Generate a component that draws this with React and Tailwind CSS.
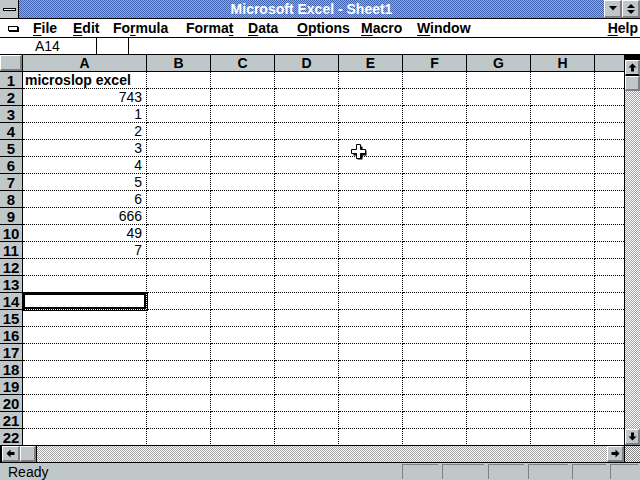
import React from "react";

const COLS = ["A", "B", "C", "D", "E", "F", "G", "H"];

const CELLS = {
  1: { text: "microslop excel", bold: true },
  2: { text: "743" },
  3: { text: "1" },
  4: { text: "2" },
  5: { text: "3" },
  6: { text: "4" },
  7: { text: "5" },
  8: { text: "6" },
  9: { text: "666" },
  10: { text: "49" },
  11: { text: "7" },
};

const MENUS = [
  ["File", 0, "w-[40px]"],
  ["Edit", 0, "w-[40px]"],
  ["Formula", 2, "w-[73px]"],
  ["Format", 5, "w-[62px]"],
  ["Data", 0, "w-[49px]"],
  ["Options", 0, "w-[64px]"],
  ["Macro", 0, "w-[56px]"],
  ["Window", 0, "w-[70px]"],
];

const raised =
  "border-t border-l border-t-white border-l-white border-r-2 border-b-2 border-r-[#808080] border-b-[#808080]";

const ARROWS = {
  up: "4.5,0.5 8.5,4.5 6,4.5 6,8.5 3,8.5 3,4.5 0.5,4.5",
  down: "4.5,8.5 8.5,4.5 6,4.5 6,0.5 3,0.5 3,4.5 0.5,4.5",
  left: "0.5,4.5 4.5,0.5 4.5,3 8.5,3 8.5,6 4.5,6 4.5,8.5",
  right: "8.5,4.5 4.5,0.5 4.5,3 0.5,3 0.5,6 4.5,6 4.5,8.5",
};

const ScrollButton = ({ dir, className = "" }) => (
  <div className={`flex items-center justify-center bg-[#c0c7c8] ${raised} ${className}`}>
    <svg width="9" height="9" viewBox="0 0 9 9">
      <polygon points={ARROWS[dir]} fill="#000" />
    </svg>
  </div>
);

const Menu = ({ label, hot }) => (
  <span>
    {label.slice(0, hot)}
    <span className="underline underline-offset-2">{label[hot]}</span>
    {label.slice(hot + 1)}
  </span>
);

const TitleBar = () => (
  <div className="flex h-[19px] border-b border-black">
    <div className="flex w-[19px] items-center justify-center border-r border-black bg-[#c0c7c8]">
      <div className="h-[3px] w-[13px] border border-black bg-white" />
    </div>
    <div className="flex flex-1 items-center justify-center [background-image:repeating-conic-gradient(#3f63b0_0_25%,#93acd9_0_50%)] [background-size:2px_2px]">
      <span className="text-[14px] font-bold leading-none text-white">
        Microsoft Excel - Sheet1
      </span>
    </div>
    <div className={`flex w-[18px] items-center justify-center border-l border-black bg-[#c0c7c8] ${raised}`}>
      <svg width="8" height="5" viewBox="0 0 8 5">
        <polygon points="0,0 8,0 4,4.5" fill="#000" />
      </svg>
    </div>
    <div className={`flex w-[18px] flex-col items-center justify-center gap-[2px] border-l border-black bg-[#c0c7c8] ${raised}`}>
      <svg width="8" height="4" viewBox="0 0 8 4">
        <polygon points="4,0 8,4 0,4" fill="#000" />
      </svg>
      <svg width="8" height="4" viewBox="0 0 8 4">
        <polygon points="0,0 8,0 4,4" fill="#000" />
      </svg>
    </div>
  </div>
);

const MenuBar = () => (
  <div className="flex h-[19px] items-center border-b border-black bg-white text-[14px] font-bold leading-none">
    <div className="ml-[8px] mr-[15px] h-[5px] w-[10px] border border-black bg-white shadow-[1px_1px_0_#000]" />
    {MENUS.map(([label, hot, w]) => (
      <div key={label} className={w}>
        <Menu label={label} hot={hot} />
      </div>
    ))}
    <div className="ml-auto pr-[2px]">
      <Menu label="Help" hot={0} />
    </div>
  </div>
);

const FormulaBar = () => (
  <div className="flex h-[17px] border-b border-black bg-white text-[14px] leading-none">
    <div className="flex w-[97px] items-center border-r border-black pl-[35px]">A14</div>
    <div className="w-[32px] border-r border-black" />
    <div className="flex-1" />
  </div>
);

const HeaderRow = () => (
  <div className="flex h-[17px] shrink-0 border-b border-black bg-[#c0c7c8] text-[14px] font-bold leading-none">
    <div className="w-[23px] border-r border-black">
      <div className={`h-full w-full ${raised}`} />
    </div>
    {COLS.map((c) => (
      <div
        key={c}
        className={`flex items-center justify-center border-r border-black ${c === "A" ? "w-[124px]" : "w-[64px]"}`}
      >
        {c}
      </div>
    ))}
    <div className="flex-1" />
  </div>
);

const Row = ({ n }) => {
  const cell = CELLS[n];
  const active = n === 14;
  return (
    <div className="flex h-[17px] shrink-0 text-[14px] leading-none">
      <div className="flex w-[23px] items-center justify-center border-r border-b border-black bg-[#c0c7c8] text-[15px] font-bold">
        {n}
      </div>
      <div
        className={`flex w-[124px] items-center border-r border-b border-dotted border-black pl-[2px] pr-[4px] ${
          cell && !cell.bold ? "justify-end" : "justify-start"
        } ${cell?.bold ? "font-bold" : ""} ${active ? "shadow-[inset_0_0_0_2px_#000] outline outline-1 outline-black" : ""}`}
      >
        {cell?.text}
      </div>
      {COLS.slice(1).map((c) => (
        <div key={c} className="w-[64px] border-r border-b border-dotted border-black" />
      ))}
      <div className="flex-1 border-b border-dotted border-black" />
    </div>
  );
};

const VScroll = () => (
  <div className="flex w-[16px] flex-col border-l border-black">
    <div className="h-[5px] bg-black" />
    <ScrollButton dir="up" className="h-[16px] border-b border-b-black" />
    <div className={`h-[15px] bg-[#c0c7c8] ${raised}`} />
    <div className="flex-1 [background-image:repeating-conic-gradient(#a0a0a0_0_25%,#ffffff_0_50%)] [background-size:2px_2px]" />
    <ScrollButton dir="down" className="h-[16px]" />
  </div>
);

const HScroll = () => (
  <div className="flex h-[17px] border-t border-black">
    <div className="w-[2px] bg-black" />
    <ScrollButton dir="left" className="w-[18px]" />
    <div className={`w-[16px] bg-[#c0c7c8] ${raised}`} />
    <div className="flex-1 border-l border-black [background-image:repeating-conic-gradient(#a0a0a0_0_25%,#ffffff_0_50%)] [background-size:2px_2px]" />
    <ScrollButton dir="right" className="w-[17px] border-l border-l-black" />
    <div className="w-[16px] border-l border-black [background-image:repeating-conic-gradient(#808080_0_25%,#ffffff_0_50%)] [background-size:2px_2px]" />
  </div>
);

const StatusBar = () => (
  <div className="flex h-[18px] items-center border-t border-black bg-[#c0c7c8] text-[14px] leading-none">
    <span className="ml-[8px]">Ready</span>
    <div className="ml-auto flex h-full items-stretch gap-[4px] py-[1px] pr-[2px]">
      {["w-[36px]", "w-[42px]", "w-[36px]", "w-[40px]", "w-[34px]", "w-[28px]"].map((w, i) => (
        <div key={i} className={`${w} border-l border-t border-[#808080] border-r-white border-b-white`} />
      ))}
    </div>
  </div>
);

const Cursor = () => (
  <svg className="absolute left-[350px] top-[143px]" width="18" height="18" viewBox="0 0 18 18">
    <path d="M6.5 2.5h5v4h4v5h-4v4h-5v-4h-4v-5h4z" fill="#000" transform="translate(1 1)" />
    <path d="M6.5 1.5h4v5h5v4h-5v5h-4v-5h-5v-4h5z" fill="#fff" stroke="#000" strokeWidth="1" />
  </svg>
);

const App = () => (
  <div className="relative flex h-[480px] w-[640px] flex-col overflow-hidden bg-white font-['Liberation_Sans',Arial,sans-serif] text-black">
    <TitleBar />
    <MenuBar />
    <FormulaBar />
    <div className="flex min-h-0 flex-1">
      <div className="flex min-w-0 flex-1 flex-col overflow-hidden">
        <HeaderRow />
        {Array.from({ length: 23 }, (_, i) => (
          <Row key={i} n={i + 1} />
        ))}
      </div>
      <VScroll />
    </div>
    <HScroll />
    <StatusBar />
    <Cursor />
  </div>
);

export default App;
